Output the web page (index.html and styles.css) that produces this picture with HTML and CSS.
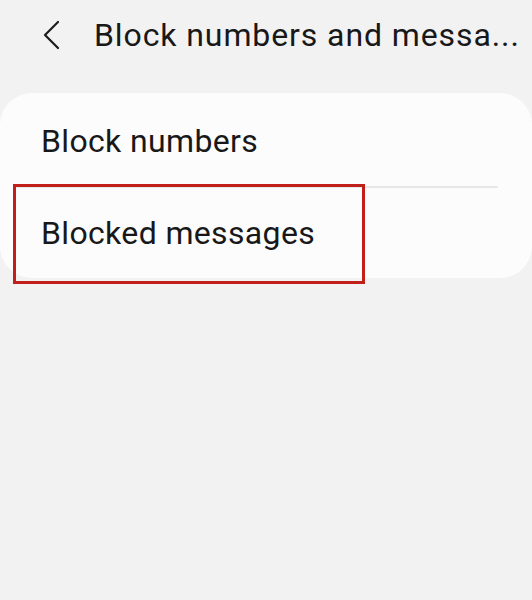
FILE: index.html
```html
<!DOCTYPE html>
<html lang="en">
<head>
<meta charset="utf-8">
<title>Block numbers and messages</title>
<link rel="stylesheet" href="styles.css">
</head>
<body>
<div class="screen">
  <header class="appbar">
    <button class="back" aria-label="Back">
      <svg width="20" height="30" viewBox="0 0 20 30" aria-hidden="true">
        <path d="M16 2 L3 15 L16 28" fill="none" stroke="#1c1c1c" stroke-width="2.2" stroke-linecap="round" stroke-linejoin="round"/>
      </svg>
    </button>
    <h1 class="title">Block numbers and messa...</h1>
  </header>
  <section class="card">
    <div class="row row-first">Block numbers</div>
    <div class="divider"></div>
    <div class="row row-last">
      Blocked messages
      <span class="highlight"></span>
    </div>
  </section>
</div>
</body>
</html>
```

FILE: styles.css
```css
html, body {
  margin: 0;
  padding: 0;
  background: #f2f2f2;
}

.screen {
  width: 532px;
  height: 600px;
  font-family: Roboto, "Noto Sans", "Liberation Sans", sans-serif;
  color: #181818;
  overflow: hidden;
}

.appbar {
  height: 70px;
  display: flex;
  align-items: center;
  padding-left: 42px;
}

.back {
  width: 20px;
  height: 30px;
  padding: 0;
  margin: 0 32px 0 0;
  border: 0;
  background: none;
  display: flex;
  align-items: center;
  justify-content: center;
}

.title {
  margin: 0;
  font-size: 32px;
  font-weight: 400;
  white-space: nowrap;
  letter-spacing: 0.9px;
}

.card {
  margin-top: 23px;
  width: 532px;
  background: #fcfcfc;
  border-radius: 32px;
}

.row {
  position: relative;
  display: flex;
  align-items: center;
  padding-left: 41px;
  font-size: 32px;
  letter-spacing: 0.35px;
}

.row-first {
  height: 93px;
  padding-top: 2px;
  box-sizing: border-box;
}

.row-last {
  height: 90px;
}

.divider {
  height: 2px;
  margin: 0 34px 0 14px;
  background: #e7e7e7;
}

.highlight {
  position: absolute;
  left: 13px;
  top: -4px;
  width: 352px;
  height: 100px;
  box-sizing: border-box;
  border: 3px solid #c01f1a;
  pointer-events: none;
}
```
